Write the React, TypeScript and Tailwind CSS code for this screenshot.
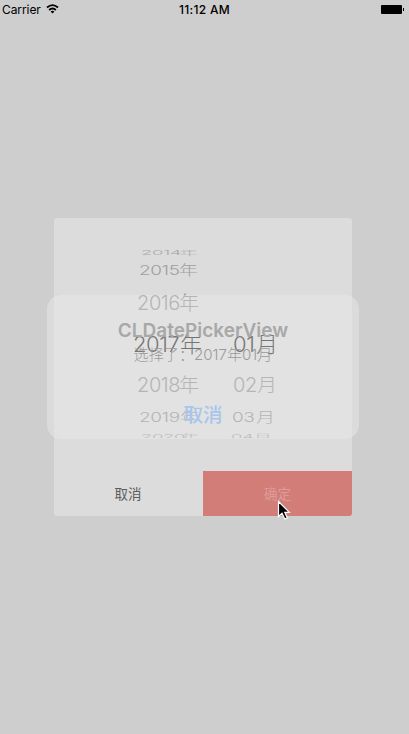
import React from "react";

const font = "font-['Inter','Noto_Sans_CJK_SC',sans-serif]";

type Row = { year: string; month: string; row: string; yearBox: string; monthBox: string };

const rows: Row[] = [
  { year: "2014", month: "", row: "h-[10px] text-[#aaaaaa] items-start", yearBox: "ml-[87px] w-[57px] text-[18.5px] scale-y-[0.36] -translate-y-[10px]", monthBox: "" },
  { year: "2015", month: "", row: "h-[22px] text-[#a0a0a0] items-center", yearBox: "ml-[85px] w-[59px] text-[19px] scale-y-[0.7]", monthBox: "" },
  { year: "2016", month: "", row: "h-[41px] text-[#828282] items-center", yearBox: "ml-[83px] w-[62px] text-[20px] scale-y-[0.98]", monthBox: "" },
  { year: "2017", month: "01", row: "h-[41px] text-black items-center", yearBox: "ml-[79px] w-[69px] text-[22px]", monthBox: "ml-[31px] w-[43px] text-[22px]" },
  { year: "2018", month: "02", row: "h-[41px] text-[#828282] items-center", yearBox: "ml-[83px] w-[62px] text-[20px] scale-y-[0.98]", monthBox: "ml-[34px] w-[42px] text-[20px] scale-y-[0.98]" },
  { year: "2019", month: "03", row: "h-[23px] text-[#808080] items-center", yearBox: "ml-[85px] w-[60px] text-[19px] scale-y-[0.7] translate-y-px", monthBox: "ml-[33px] w-[41px] text-[19px] scale-y-[0.7] translate-y-px" },
  { year: "2020", month: "04", row: "h-[9px] text-[#909090] items-start", yearBox: "ml-[87px] w-[57px] text-[18.5px] scale-y-[0.36] -translate-y-[4px]", monthBox: "ml-[33px] w-[39px] text-[18.5px] scale-y-[0.36] -translate-y-[4px]" },
];

function StatusBar() {
  return (
    <header className="grid h-5 grid-cols-3 items-center text-[12px] leading-none text-black">
      <div className="flex items-center gap-[5px] pl-[2px]">
        <span className="font-['Inter'] tracking-[-0.08px]">Carrier</span>
        <svg width="13" height="10" viewBox="0 0 13 10" fill="none" stroke="black" strokeWidth="1.8" className="-mt-[2px]">
          <path d="M1 3.5Q6.5 -1.2 12 3.5M3.1 6Q6.5 3 9.9 6" />
          <path d="M4.6 7.4L6.5 9.5L8.4 7.4Q6.5 6 4.6 7.4Z" fill="black" stroke="none" />
        </svg>
      </div>
      <span className="text-center font-['Inter'] font-medium tracking-[0.3px]">11:12 AM</span>
      <div className="-mt-[2px] flex items-center justify-end gap-px pr-[5px]">
        <span className="h-[9px] w-[21px] rounded-[1px] bg-black" />
        <span className="h-[3px] w-px bg-black" />
      </div>
    </header>
  );
}

function Picker() {
  return (
    <div className="mt-8 h-[188px] overflow-hidden">
      {rows.map((r) => (
        <div key={r.year} className={"flex overflow-visible font-light leading-[24px] " + r.row}>
          <div className={"flex shrink-0 justify-between whitespace-nowrap " + r.yearBox}>
            <span className="tracking-[-0.4px]">{r.year}</span>
            <span className="-ml-[4px]">年</span>
          </div>
          {r.month && (
            <div className={"flex shrink-0 justify-between whitespace-nowrap " + r.monthBox}>
              <span className="tracking-[-0.4px]">{r.month}</span>
              <span className="-mr-[2px] -ml-[6px]">月</span>
            </div>
          )}
        </div>
      ))}
    </div>
  );
}

export default function App() {
  return (
    <div className={"relative h-[734px] w-[409px] overflow-hidden bg-[#cecece] " + font}>
      <StatusBar />
      <main className="ml-[54px] mt-[198px] flex h-[298px] w-[298px] flex-col overflow-hidden rounded-[3px] bg-[#dcdcdc]">
        <Picker />
        <div className="mt-auto flex h-[45px] text-[13.5px]">
          <button className="w-[149px] pr-px pt-[2px] text-[#5c5c5c]">取消</button>
          <button className="w-[149px] bg-[#d37d78] pt-[2px] text-[#dc9c98]">确定</button>
        </div>
      </main>
      <section className="absolute left-[47px] top-[295px] flex h-[144px] w-[312px] flex-col items-center rounded-[14px] bg-[#e8e8e8]/50">
        <h1 className="mt-[24px] whitespace-nowrap text-[19px] font-semibold leading-[24px] text-[#a8a8a8]">CLDatePickerView</h1>
        <p className="mt-[2px] whitespace-nowrap text-[15.1px] font-light leading-[20px] text-[#9a9a9a]">选择了：2017年01月</p>
        <button className="mt-[36px] text-[19.5px] font-medium leading-[28px] text-[#a7c6ec]">取消</button>
      </section>
      <svg className="absolute left-[277px] top-[500px]" width="14" height="22" viewBox="0 0 14 22">
        <path d="M1.5 1.5V16.5L5 13.3L7.8 19L10.3 17.9L7.8 12.3H12.3Z" fill="black" stroke="white" strokeWidth="1.2" />
      </svg>
    </div>
  );
}
